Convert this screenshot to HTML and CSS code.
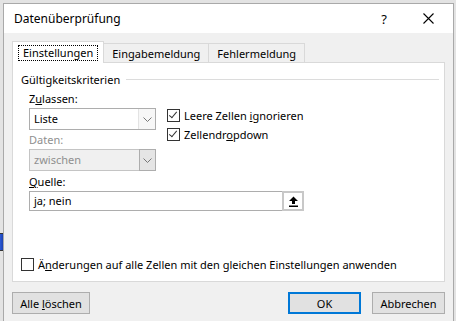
FILE: index.html
```html
<!DOCTYPE html>
<html lang="de">
<head>
    <meta charset="UTF-8">
    <title>Datenüberprüfung</title>
    <link rel="stylesheet" href="styles.css">
</head>
<body>
    <div class="hinten"></div>

    <div class="dialog">
        <div class="titelleiste">
            <span class="titel">Datenüberprüfung</span>
            <span class="hilfe">?</span>
            <span class="schliessen">
                <svg width="11" height="11" viewBox="0 0 11 11"><path d="M0.5 0.5 L10.5 10.5 M10.5 0.5 L0.5 10.5" stroke="#000" stroke-width="1.1" fill="none"/></svg>
            </span>
        </div>

        <div class="inhalt">
            <div class="reiter">
                <div class="reiter-tab aktiv"><span class="fokus">Einstellungen</span></div>
                <div class="reiter-tab">Eingabemeldung</div>
                <div class="reiter-tab">Fehlermeldung</div>
            </div>

            <div class="seite">
                <div class="gruppe"><span>Gültigkeitskriterien</span></div>

                <div class="kriterien">
                    <div class="spalte">
                        <div class="beschriftung">Z<u>u</u>lassen:</div>
                        <div class="auswahl">
                            <span class="wert">Liste</span>
                            <span class="pfeil">
                                <svg width="9" height="5" viewBox="0 0 9 5"><path d="M0.5 0.5 L4.5 4.5 L8.5 0.5" stroke="#777" fill="none"/></svg>
                            </span>
                        </div>
                        <div class="beschriftung gesperrt daten">Daten:</div>
                        <div class="auswahl gesperrt">
                            <span class="wert">zwischen</span>
                            <span class="pfeil">
                                <svg width="9" height="5" viewBox="0 0 9 5"><path d="M0.5 0.5 L4.5 4.5 L8.5 0.5" stroke="#777" fill="none"/></svg>
                            </span>
                        </div>
                    </div>

                    <div class="optionen">
                        <div class="option">
                            <span class="kasten an"></span>
                            <span>Leere Zellen <u>i</u>gnorieren</span>
                        </div>
                        <div class="option">
                            <span class="kasten an"></span>
                            <span>Zellendr<u>o</u>pdown</span>
                        </div>
                    </div>
                </div>

                <div class="beschriftung"><u>Q</u>uelle:</div>
                <div class="quelle">
                    <span class="wert">ja; nein</span>
                    <span class="bereich">
                        <svg width="11" height="11" viewBox="0 0 11 11"><path d="M5.5 0.5 L10 5 L7 5 L7 8 L4 8 L4 5 L1 5 Z" fill="#000"/><rect x="1" y="9.5" width="9" height="1.5" fill="#000"/></svg>
                    </span>
                </div>

                <div class="option anwenden">
                    <span class="kasten"></span>
                    <span>Ä<u>n</u>derungen auf alle Zellen mit den gleichen Einstellungen anwenden</span>
                </div>
            </div>

            <div class="knoepfe">
                <button class="knopf">Alle <u>l</u>öschen</button>
                <span class="luecke"></span>
                <button class="knopf standard">OK</button>
                <button class="knopf">Abbrechen</button>
            </div>
        </div>
    </div>
</body>
</html>
```

FILE: styles.css
```css
body {
    margin: 0;
    padding: 3px 2px 0 3px;
    background: #e3e3e3;
    font-family: 'Noto Sans', sans-serif;
    font-size: 11px;
    color: #000;
    height: 318px;
    overflow: hidden;
    position: relative;
}

.hinten {
    position: absolute;
    left: 0;
    top: 233px;
    width: 4px;
    height: 16px;
    border: 1px solid #333;
    border-left: none;
    background: linear-gradient(90deg, #2a5ad8, #1a3aa0);
}

.dialog {
    border: 1px solid #a9a9a9;
    border-bottom: none;
    background: #f0f0f0;
    height: 330px;
    position: relative;
}

.titelleiste {
    height: 29px;
    background: #fff;
    display: flex;
    align-items: center;
    padding: 0 19px 0 10px;
    font-size: 12px;
}

.titel {
    flex: 1;
}

.hilfe {
    margin-right: 36px;
    font-size: 13px;
}

.schliessen {
    display: flex;
}

.inhalt {
    padding: 8px 8px 0 8px;
}

.reiter {
    display: flex;
    align-items: flex-end;
    height: 21px;
    position: relative;
    z-index: 1;
}

.reiter-tab {
    height: 19px;
    padding: 0 8px;
    border: 1px solid #d9d9d9;
    border-bottom: none;
    border-left: none;
    display: flex;
    align-items: center;
    background: #f0f0f0;
    box-sizing: border-box;
}

.reiter-tab.aktiv {
    height: 22px;
    background: #fff;
    border-left: 1px solid #d9d9d9;
    padding: 0 5px;
    margin-bottom: -1px;
}

.fokus {
    border: 1px dotted #000;
    padding: 0 4px;
    line-height: 14px;
}

.seite {
    background: #fff;
    border: 1px solid #d9d9d9;
    height: 220px;
    box-sizing: border-box;
    padding: 7px 8px 0 8px;
}

.gruppe {
    display: flex;
    align-items: center;
    gap: 6px;
    height: 18px;
}

.gruppe::after {
    content: '';
    flex: 1;
    border-top: 1px solid #dcdcdc;
    margin-right: -3px;
}

.kriterien {
    display: flex;
    padding-left: 8px;
    gap: 11px;
}

.spalte {
    width: 127px;
}

.beschriftung {
    height: 18px;
    line-height: 18px;
    margin-top: 2px;
}

.beschriftung.daten {
    margin-top: 1px;
}

.seite > .beschriftung {
    margin-left: 8px;
    margin-top: 2px;
}

.gesperrt {
    color: #8f8f8f;
}

.auswahl {
    height: 22px;
    border: 1px solid #adadad;
    box-sizing: border-box;
    display: flex;
    background: #fff;
}

.auswahl .wert {
    flex: 1;
    padding-left: 4px;
    line-height: 20px;
}

.pfeil {
    width: 16px;
    border-left: 1px solid #e3e3e3;
    background: #f7f7f7;
    display: flex;
    align-items: center;
    justify-content: center;
}

.auswahl.gesperrt {
    background: #f0f0f0;
    border-color: #c4c4c4;
}

.auswahl.gesperrt .pfeil {
    border: 1px solid #adadad;
    margin: -1px -1px -1px 0;
    background: #e5e5e5;
    width: 15px;
}

.optionen {
    display: flex;
    flex-direction: column;
    gap: 5px;
    padding-top: 20px;
}

.option {
    display: flex;
    align-items: center;
    gap: 4px;
    height: 14px;
}

.kasten {
    width: 13px;
    height: 13px;
    border: 1px solid #333;
    box-sizing: border-box;
    background: #fff;
    position: relative;
    flex: none;
}

.kasten.an::after {
    content: '';
    position: absolute;
    left: 3px;
    top: 0;
    width: 3px;
    height: 7px;
    border: solid #333;
    border-width: 0 1px 1px 0;
    transform: rotate(40deg);
}

.quelle {
    margin-left: 8px;
    width: 275px;
    height: 20px;
    border: 1px solid #adadad;
    box-sizing: border-box;
    display: flex;
}

.quelle .wert {
    flex: 1;
    padding-left: 4px;
    line-height: 18px;
}

.bereich {
    width: 22px;
    border: 2px solid #c8c8c8;
    margin: -1px -1px -1px 0;
    box-sizing: border-box;
    display: flex;
    align-items: center;
    justify-content: center;
    background: #fff;
}

.anwenden {
    margin-top: 46px;
}

.knoepfe {
    display: flex;
    margin-top: 10px;
    gap: 11px;
}

.luecke {
    flex: 1;
}

.knopf {
    height: 22px;
    border: 1px solid #adadad;
    background: #e1e1e1;
    font-family: 'Noto Sans', sans-serif;
    font-size: 11px;
    color: #000;
    padding: 0;
    width: 73px;
}

.knopf:first-child {
    width: 78px;
}

.knopf.standard {
    border: 2px solid #0078d7;
}
```
